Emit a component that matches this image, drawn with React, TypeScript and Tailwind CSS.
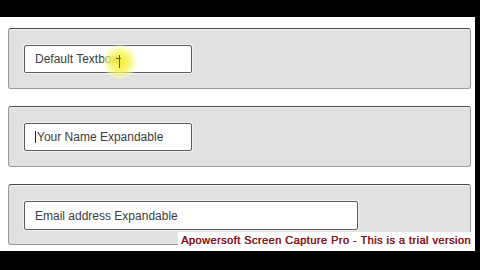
import React from 'react';

const Field: React.FC<{ label: string; wide?: boolean; caret?: boolean }> = ({ label, wide, caret }) => (
  <div
    className={`ml-[15px] mt-[16px] flex items-center whitespace-nowrap rounded-[2px] border border-[#5a5a5a] bg-white pl-[10px] text-[12px] text-[#3c3c3c] shadow-[0_0_0_1px_#f4f4f4] ${
      wide ? 'h-[29px] w-[334px]' : 'h-[28px] w-[168px]'
    }`}
  >
    {caret && <span className="mr-[1px] h-[12px] w-px bg-[#222]" />}
    {label}
  </div>
);

const Panel: React.FC<{ children: React.ReactNode }> = ({ children }) => (
  <div className="h-[61px] w-[463px] rounded-[3px] border border-[#9a9a9a] border-t-[#4a4a4a] bg-[#e1e1e1] shadow-[inset_0_1px_0_#f2f2f2]">
    {children}
  </div>
);

export default function App() {
  return (
    <div className="relative flex h-[270px] w-[480px] flex-col bg-black" style={{ fontFamily: '"Liberation Sans", Arial, sans-serif' }}>
      <div className="h-[17px] shrink-0" />
      <div className="flex h-[234px] w-[475px] flex-col gap-[17px] bg-white pl-[8px] pt-[11px]">
        <Panel>
          <Field label="Default Textbox" />
        </Panel>
        <Panel>
          <Field label="Your Name Expandable" caret />
        </Panel>
        <Panel>
          <Field label="Email address Expandable" wide />
        </Panel>
      </div>

      {/* cursor highlight */}
      <div className="absolute left-[102px] top-[44px] h-[36px] w-[36px] rounded-full bg-[radial-gradient(circle,rgba(245,240,40,0.95)_0%,rgba(247,243,90,0.85)_35%,rgba(255,255,170,0.45)_60%,rgba(255,255,255,0)_72%)]" />
      <div className="absolute left-[119px] top-[55px] h-[13px] w-px bg-[#555]" />
      <div className="absolute left-[116px] top-[58px] h-px w-[5px] bg-[#555]" />

      {/* watermark */}
      <div className="absolute left-[178px] top-[232px] flex h-[16px] w-[296px] items-center whitespace-nowrap bg-white pl-[3px] text-[11px] tracking-[0.45px] text-[#8a1018] [text-shadow:0.4px_0_0_#8a1018]">
        Apowersoft Screen Capture Pro - This is a trial version
      </div>
    </div>
  );
}
